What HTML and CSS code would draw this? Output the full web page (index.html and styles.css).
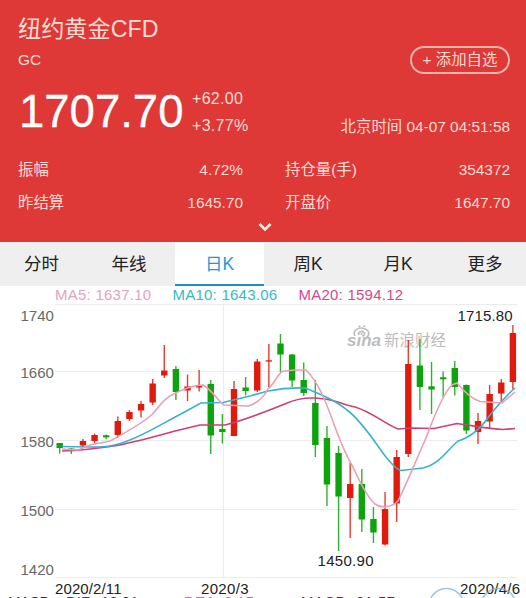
FILE: index.html
```html
<!DOCTYPE html>
<html lang="zh-CN">
<head>
  <meta charset="UTF-8" />
  <meta name="viewport" content="width=device-width, initial-scale=1.0"/>
  <title>纽约黄金CFD</title>
  <link rel="stylesheet" href="styles.css">
</head>
<body>
  <header class="quote">
    <h1 class="name">纽约黄金CFD</h1>
    <div class="code-row">
      <span>GC</span>
      <button class="add-btn" type="button">+ 添加自选</button>
    </div>
    <div class="price-row">
      <span class="price">1707.70</span>
      <div class="change">
        <span>+62.00</span>
        <span>+3.77%</span>
      </div>
      <span class="time">北京时间 04-07 04:51:58</span>
    </div>
    <div class="stats">
      <div class="stat"><span>振幅</span><span>4.72%</span></div>
      <div class="stat"><span>持仓量(手)</span><span>354372</span></div>
      <div class="stat"><span>昨结算</span><span>1645.70</span></div>
      <div class="stat"><span>开盘价</span><span>1647.70</span></div>
    </div>
    <svg class="arrow" width="16" height="10" viewBox="0 0 16 10"><path d="M2.5 2 L8 7.5 L13.5 2"/></svg>
  </header>

  <nav class="tabs">
    <a class="tab">分时</a>
    <a class="tab">年线</a>
    <a class="tab active">日K</a>
    <a class="tab">周K</a>
    <a class="tab">月K</a>
    <a class="tab">更多</a>
  </nav>

  <div class="legend">
    <span class="ma5">MA5: 1637.10</span>
    <span class="ma10">MA10: 1643.06</span>
    <span class="ma20">MA20: 1594.12</span>
  </div>

  <svg class="chart" width="526" height="296" viewBox="0 302 526 296">
    <path class="grid" d="M55 304.5H517M55 371.5H517M55 440.5H517M55 509.5H517M55 577.5H517M223.5 304V577"/>

    <g class="axis-y">
      <text x="20.5" y="320.5">1740</text>
      <text x="20.5" y="377.5">1660</text>
      <text x="20.5" y="446.5">1580</text>
      <text x="20.5" y="515.5">1500</text>
      <text x="20.5" y="574.5">1420</text>
    </g>

    <g class="watermark">
      <path class="eye" d="M355 336 C352 330 359 327 364 328.5 C370 330.5 370 335 366 338"/>
      <path class="eye" d="M358.5 335 C358 331.5 362 330.5 364 332.5 C365.5 334.5 364 336 362 336M359 327.5 L360 325.5M363.5 327 L365 325.5"/>
      <circle cx="361.5" cy="334" r="1.1"/>
      <text class="sina" x="347" y="346" textLength="34" lengthAdjust="spacingAndGlyphs">sına</text>
      <text class="sina-cn" x="384" y="345.5">新浪财经</text>
    </g>

    <g id="candles"></g>

    <path class="line line20" d="M62 451 C80 450.5 98 448.5 117 445.5 C135 442 150 438 175 431 L200 425 L225 425 C245 420 265 412 286 403.5 C300 397 312 397 325 399 C338 401 345 405 355 407 C372 412 385 424 398 429 L412 428 L434 428.5 L457 423.5 C475 426 490 429 503 429.5 L515 428.5"/>
    <path class="line line10" d="M62 446.5 L90 447 C105 447.5 115 446 130 440 C150 432 165 422 180 414.5 L201 403 L223 402.5 L250 396 L268 391 C278 389 290 387.5 305 388 C320 394 335 400 347 410 C362 421 376 444 386 457 C392 464 396 469.5 401 470.5 L423 468 C440 464 448 449 458 441 C468 438 480 430 490 415 C500 402 507 395 515 388"/>
    <path class="line line5" d="M62 449 L78 450 L90 445 L110 441 C125 433 140 425 152 414.5 C160 406 165 397 172 395 C182 389 195 385 203 385 C212 390 217 400 224 405 L248 406 C258 403 264 397 268 389 C275 383 278 374 282 371.5 L294 370 L306 370 C318 382 325 400 331 416 C338 436 347 457 353 467 C362 487 369 499 375 504 C382 509 392 507 398 501 C406 485 415 463 426 438 C436 411 444 392 452 385 L457 383 C466 394 472 399 480 401.5 L502 403 L515 392"/>

    <text class="mark" x="457.5" y="320.5" textLength="55">1715.80</text>
    <text class="mark" x="317.5" y="565.5" textLength="56">1450.90</text>

    <text class="macd" x="8" y="606.8" textLength="46">MACD:</text>
    <text class="macd dif" x="66" y="606.8">DIF:</text>
    <text class="macd" x="101" y="606.8">12.31</text>
    <text class="macd dea" x="184" y="606.8" textLength="70">DEA: 9.15</text>
    <text class="macd total" x="301" y="606.8" textLength="94">MACD: 21.57</text>

    <text class="mark" x="55" y="593.5" textLength="66.5">2020/2/11</text>
    <text class="mark" x="201" y="593.5" textLength="47.5">2020/3</text>
    <text class="mark" x="460" y="593.5" textLength="60">2020/4/6</text>

    <circle class="zoom-btn" cx="446.5" cy="606" r="17.5"/>
    <circle class="zoom-btn" cx="498.5" cy="606" r="17.5"/>
  </svg>

  <script>
    // direction, body top, body bottom, wick top, wick bottom
    const candles = [
      ["down", 443, 448, 443, 453.5],
      ["down", 448.5, 449.7, 448, 454],
      ["up", 441, 445.5, 439, 448],
      ["up", 435, 441, 433.5, 443.5],
      ["down", 435.3, 437.3, 434.5, 439],
      ["up", 421, 435, 416.5, 438],
      ["up", 412, 419, 410, 421],
      ["up", 404, 410.5, 401, 417.5],
      ["up", 383.5, 402.5, 379, 405],
      ["up", 370.5, 375.5, 345, 378],
      ["down", 369, 392, 366, 400],
      ["up", 386.5, 390.5, 374.5, 401],
      ["up", 385, 387.5, 370, 391.5],
      ["down", 384, 435.5, 380, 454],
      ["down", 429, 432, 414, 443.5],
      ["up", 389, 436, 381, 436],
      ["down", 387.5, 391, 377, 395.5],
      ["up", 361.5, 390.5, 359, 392],
      ["up", 360.3, 361.6, 344, 387],
      ["down", 343.5, 354.5, 334, 372],
      ["down", 354.5, 380.5, 354, 387],
      ["down", 380, 393, 362.5, 396],
      ["down", 403, 445, 380, 457],
      ["down", 438, 484.5, 426, 506],
      ["down", 453, 496.5, 446, 551],
      ["up", 484, 498, 463, 538],
      ["down", 484, 519.5, 469, 532],
      ["down", 519, 532.5, 507, 543],
      ["up", 509, 544.5, 492, 545.5],
      ["up", 457, 503.5, 450, 522],
      ["up", 364, 454, 340, 457],
      ["down", 365.5, 387, 339, 410],
      ["down", 386.3, 389.5, 362, 414],
      ["down", 377.3, 379.3, 371.5, 397],
      ["down", 368, 387, 361, 395.5],
      ["down", 385, 430.5, 384.5, 434],
      ["up", 421, 432, 413, 444],
      ["up", 394, 421.5, 385, 428],
      ["up", 382.5, 393.5, 379, 401],
      ["up", 333, 382, 325, 389]
    ];
    const ns = "http://www.w3.org/2000/svg";
    const group = document.getElementById("candles");

    function addRect(cls, x, y, w, h) {
      const r = document.createElementNS(ns, "rect");
      r.setAttribute("class", cls);
      r.setAttribute("x", x);
      r.setAttribute("y", y);
      r.setAttribute("width", w);
      r.setAttribute("height", h);
      group.appendChild(r);
    }

    candles.forEach(([dir, top, bottom, high, low], i) => {
      const x = 59.7 + i * 11.62;
      addRect(dir + " wick", x - 0.7, high, 1.4, low - high);
      addRect(dir, x - 3.2, top, 6.4, bottom - top);
    });
  </script>
</body>
</html>
```
FILE: styles.css
```css
body {
  margin: 0;
  width: 526px;
  height: 598px;
  overflow: hidden;
  background: #fff;
  font-family: "Liberation Sans", "Noto Sans CJK SC", sans-serif;
}
.quote {
  box-sizing: border-box;
  height: 242px;
  padding: 14px 16px 0 18px;
  background: #de3837;
  color: #fcdcd3;
  font-size: 15.4px;
  display: flex;
  flex-direction: column;
}
.name {
  margin: 0;
  font-size: 23.2px;
  font-weight: 400;
  line-height: 30px;
}
.code-row {
  display: flex;
  justify-content: space-between;
  align-items: center;
  height: 32px;
}
.add-btn {
  box-sizing: border-box;
  width: 100px;
  height: 28px;
  padding: 0;
  border: 2px solid #f5b5aa;
  border-radius: 14px;
  background: none;
  color: inherit;
  font: inherit;
  line-height: 24px;
}
.price-row {
  display: flex;
  height: 68px;
  margin-top: 4px;
}
.price {
  box-sizing: border-box;
  width: 174px;
  padding-left: 1px;
  color: #fff;
  font-size: 45.5px;
  line-height: 64px;
  -webkit-text-stroke: 0.3px #fff;
}
.change {
  display: flex;
  flex-direction: column;
  flex: 1;
  padding-top: 5px;
  font-size: 16px;
  line-height: 27px;
  letter-spacing: 0.3px;
}
.time {
  padding-top: 35px;
  line-height: 24px;
}
.stats {
  display: grid;
  grid-template-columns: 225px 225px;
  column-gap: 42px;
  padding-top: 5px;
}
.stat {
  display: flex;
  justify-content: space-between;
  line-height: 33px;
}
.arrow {
  align-self: center;
  margin: 3px 0 0 2px;
  fill: none;
  stroke: #fff0e4;
  stroke-width: 2.6;
}
.tabs {
  display: grid;
  grid-template-columns: 83px 92px 89px 88px 92px 82px;
  height: 44px;
  background: #efefef;
}
.tab {
  box-sizing: border-box;
  height: 44px;
  text-align: center;
  font-size: 17.5px;
  line-height: 44px;
  color: #222;
}
.tab.active {
  background: #fff;
  color: #1d9ad6;
  border-bottom: 2px solid #1a8fd0;
}
.legend {
  display: flex;
  gap: 21px;
  height: 16px;
  padding-left: 55px;
  font-size: 15px;
  line-height: 17px;
  letter-spacing: 0.25px;
}
.ma5 {
  color: #e6a3bd;
}
.ma10 {
  color: #35b9c8;
}
.ma20 {
  color: #d4488c;
}
.chart {
  display: block;
}
.grid {
  stroke: #ececec;
  stroke-width: 1;
  fill: none;
}
.axis-y {
  fill: #686868;
  font-size: 15px;
}
.watermark {
  fill: #bcbcbc;
}
.eye {
  fill: none;
  stroke: #bcbcbc;
  stroke-width: 1.6;
}
.sina {
  font-size: 16px;
  font-weight: 700;
  font-style: italic;
}
.sina-cn {
  font-size: 15.5px;
}
.up {
  fill: #e01b0d;
}
.down {
  fill: #0da30d;
}
.wick {
  opacity: 0.85;
}
.line {
  fill: none;
  stroke-width: 1.6;
}
.line5 {
  stroke: #e9a0b5;
}
.line10 {
  stroke: #38b2cd;
}
.line20 {
  stroke: #d03f72;
}
.mark {
  fill: #222;
  font-size: 15px;
}
.macd {
  fill: #333;
  font-size: 15px;
}
.dif {
  fill: #3434b8;
}
.dea {
  fill: #d855c8;
}
.total {
  fill: #7a2038;
}
.zoom-btn {
  fill: none;
  stroke: #7db4da;
  stroke-opacity: 0.75;
  stroke-width: 1.6;
}
```
